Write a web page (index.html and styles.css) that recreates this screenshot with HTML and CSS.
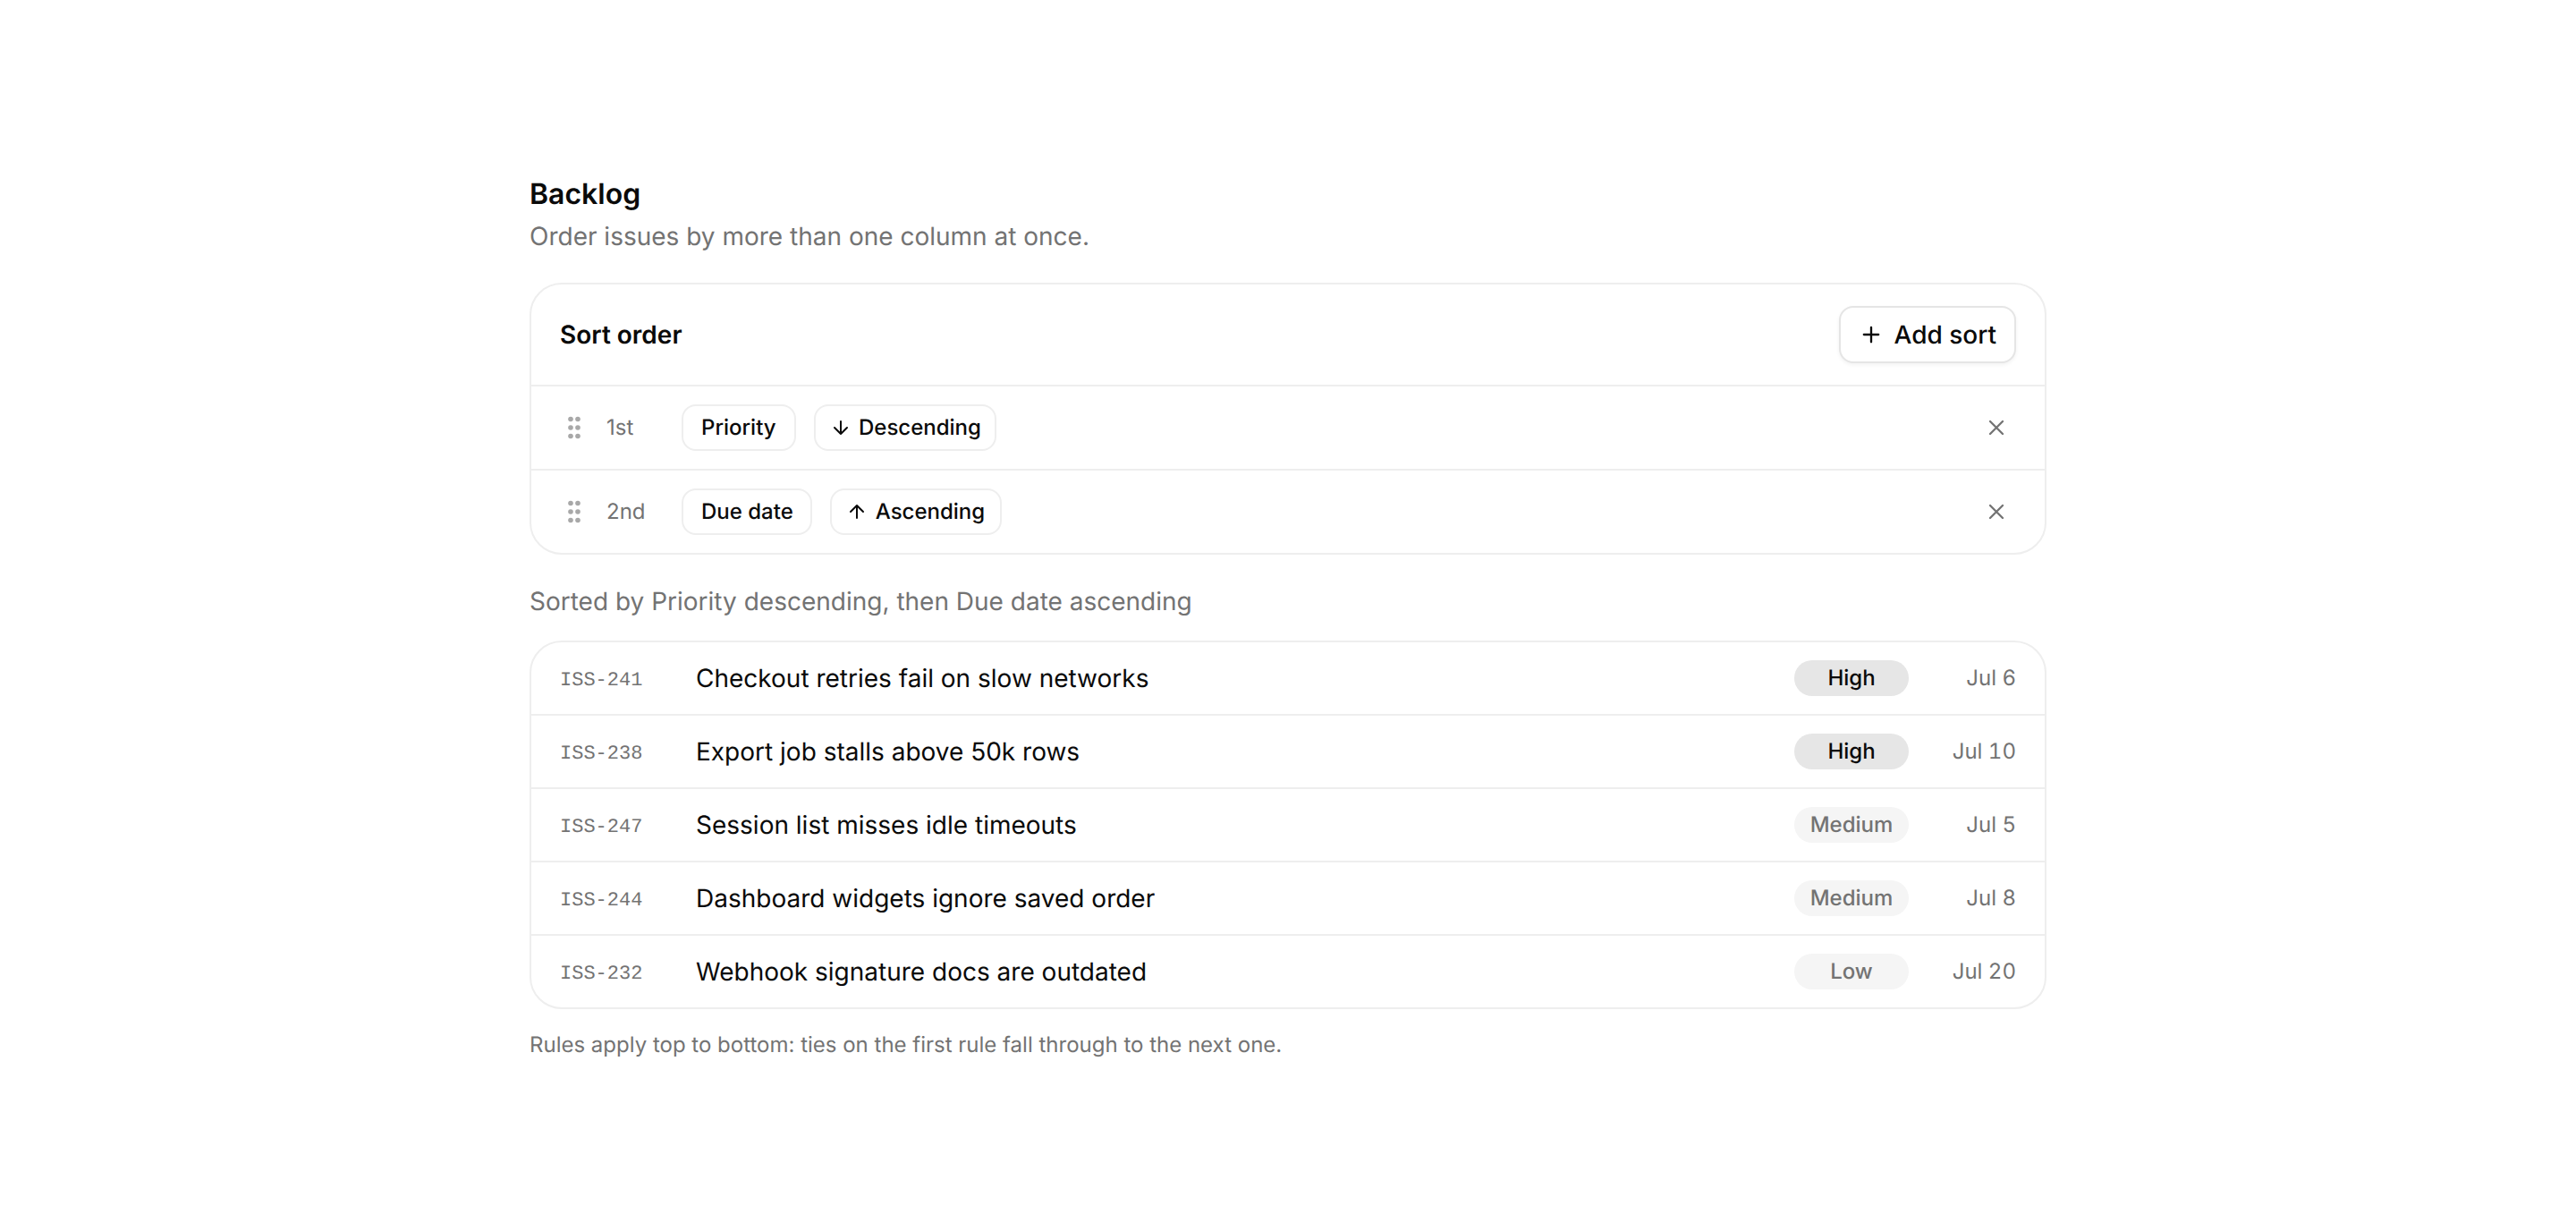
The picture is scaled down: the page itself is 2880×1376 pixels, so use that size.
FILE: index.html
```
<!DOCTYPE html>
<html lang="en">

<head>
  <meta charset="UTF-8">
  <meta name="viewport" content="width=device-width, initial-scale=1.0">
  <title>Backlog</title>
  <link rel="stylesheet" href="styles.css">
</head>
<body>
  <!-- Shared icons -->
  <svg class="icon-defs" width="0" height="0" aria-hidden="true">
    <symbol id="plus" viewBox="0 0 24 24"><path d="M5 12h14M12 5v14"/></symbol>
    <symbol id="close" viewBox="0 0 24 24"><path d="M18 6 6 18M6 6l12 12"/></symbol>
    <symbol id="arrow-down" viewBox="0 0 24 24"><path d="M12 5v14M19 12l-7 7-7-7"/></symbol>
    <symbol id="arrow-up" viewBox="0 0 24 24"><path d="M5 12l7-7 7 7M12 19V5"/></symbol>
    <symbol id="grip" viewBox="0 0 16 26">
      <circle cx="4" cy="3.5" r="2.8"/><circle cx="12" cy="3.5" r="2.8"/>
      <circle cx="4" cy="13" r="2.8"/><circle cx="12" cy="13" r="2.8"/>
      <circle cx="4" cy="22.5" r="2.8"/><circle cx="12" cy="22.5" r="2.8"/>
    </symbol>
  </svg>

  <main class="backlog">
    <h1>Backlog</h1>
    <p class="subtitle">Order issues by more than one column at once.</p>

    <!-- Sort rules -->
    <section class="card">
      <div class="card-header">
        <h2>Sort order</h2>
        <button class="add-button" type="button"><svg class="icon"><use href="#plus"/></svg>Add sort</button>
      </div>
      <div class="rule">
        <span class="grip"><svg><use href="#grip"/></svg></span>
        <span class="rank">1st</span>
        <button class="chip priority" type="button">Priority</button>
        <button class="chip direction descending" type="button"><svg class="icon"><use href="#arrow-down"/></svg>Descending</button>
        <button class="remove" type="button" aria-label="Remove"><svg class="icon"><use href="#close"/></svg></button>
      </div>
      <div class="rule">
        <span class="grip"><svg><use href="#grip"/></svg></span>
        <span class="rank">2nd</span>
        <button class="chip due-date" type="button">Due date</button>
        <button class="chip direction ascending" type="button"><svg class="icon"><use href="#arrow-up"/></svg>Ascending</button>
        <button class="remove" type="button" aria-label="Remove"><svg class="icon"><use href="#close"/></svg></button>
      </div>
    </section>

    <p class="summary">Sorted by Priority descending, then Due date ascending</p>

    <!-- Issues -->
    <section class="card">
      <div class="issue">
        <span class="issue-id">ISS-241</span>
        <span class="issue-title">Checkout retries fail on slow networks</span>
        <span class="badge high">High</span>
        <span class="due">Jul 6</span>
      </div>
      <div class="issue">
        <span class="issue-id">ISS-238</span>
        <span class="issue-title">Export job stalls above 50k rows</span>
        <span class="badge high">High</span>
        <span class="due">Jul 10</span>
      </div>
      <div class="issue">
        <span class="issue-id">ISS-247</span>
        <span class="issue-title">Session list misses idle timeouts</span>
        <span class="badge">Medium</span>
        <span class="due">Jul 5</span>
      </div>
      <div class="issue">
        <span class="issue-id">ISS-244</span>
        <span class="issue-title">Dashboard widgets ignore saved order</span>
        <span class="badge">Medium</span>
        <span class="due">Jul 8</span>
      </div>
      <div class="issue">
        <span class="issue-id">ISS-232</span>
        <span class="issue-title">Webhook signature docs are outdated</span>
        <span class="badge">Low</span>
        <span class="due">Jul 20</span>
      </div>
    </section>

    <p class="note">Rules apply top to bottom: ties on the first rule fall through to the next one.</p>
  </main>
</body>
</html>
```
FILE: styles.css
```
* {
  box-sizing: border-box;
}

body {
  font-family: Inter, sans-serif;
  font-size: 28px;
  line-height: 40px;
  text-rendering: geometricPrecision;
  margin: 0;
  display: flex;
  justify-content: center;
  align-items: center;
  min-height: 100vh;
  color: #0a0a0a;
  background-color: #fff;
}

.icon-defs {
  position: absolute;
}

.backlog {
  width: 1696px;
}

h1,
h2,
p {
  margin: 0;
}

h1 {
  padding-top: 1px;
  font-size: 32px;
  line-height: 47px;
  font-weight: 600;
}

h2 {
  font-size: 28px;
  font-weight: 600;
}

.subtitle,
.summary,
.note {
  color: #737373;
}

.subtitle {
  margin: 4px 0 32px;
}

.summary {
  margin: 32px 0 24px;
}

.note {
  margin-top: 24px;
  font-size: 24px;
  line-height: 32px;
}

.card {
  border: 2px solid #eee;
  border-radius: 36px;
}

.card > * + * {
  border-top: 2px solid #eee;
}

.card-header {
  display: flex;
  align-items: center;
  justify-content: space-between;
  padding: 24px 32px;
}

button {
  display: flex;
  align-items: center;
  font-family: inherit;
  font-weight: 500;
  line-height: inherit;
  text-rendering: inherit;
  white-space: nowrap;
  color: inherit;
  background-color: #fff;
  cursor: pointer;
}

.icon {
  flex-shrink: 0;
  width: 28px;
  height: 28px;
  fill: none;
  stroke: currentColor;
  stroke-width: 2;
  stroke-linecap: round;
  stroke-linejoin: round;
}

.add-button {
  width: 198px;
  height: 64px;
  padding: 0 0 0 20px;
  gap: 11.5px;
  font-size: 28px;
  border: 2px solid #e5e5e5;
  border-radius: 16px;
  box-shadow: 0 2px 4px rgba(0, 0, 0, 0.05);
}

/* Sort rule rows */
.rule {
  display: flex;
  align-items: center;
  gap: 20px;
  padding: 20px 32px;
  font-size: 24px;
}

.grip {
  display: flex;
  justify-content: center;
  width: 32px;
}

.grip svg {
  width: 16px;
  height: 26px;
  fill: #a8a8a8;
}

.rank {
  width: 64px;
  color: #737373;
}

.chip {
  height: 52px;
  padding: 0 0 0 20px;
  font-size: 24px;
  border: 2px solid #eee;
  border-radius: 16px;
}

.direction {
  padding-left: 16px;
  gap: 8px;
}

.priority {
  width: 128px;
}

.due-date {
  width: 146px;
}

.descending {
  width: 204px;
}

.ascending {
  width: 192px;
  gap: 8.75px;
}

.chip .icon {
  width: 24px;
  height: 24px;
}

.remove {
  justify-content: center;
  width: 44px;
  height: 44px;
  margin-left: auto;
  padding: 0;
  border: none;
  color: #737373;
}

/* Issue rows */
.issue {
  display: flex;
  align-items: center;
  gap: 24px;
  padding: 20px 32px;
}

.issue-id {
  align-self: flex-start;
  width: 128px;
  padding-top: 10px;
  font-family: "Liberation Mono", monospace;
  font-size: 22px;
  line-height: 25px;
  color: #737373;
}

.issue-title {
  flex: 1;
}

.badge {
  width: 128px;
  font-size: 24px;
  font-weight: 500;
  text-align: center;
  color: #737373;
  background-color: #f5f5f5;
  border-radius: 20px;
}

.badge.high {
  color: #0a0a0a;
  background-color: #e6e6e6;
}

.due {
  width: 96px;
  font-size: 24px;
  text-align: right;
  color: #737373;
  font-variant-numeric: tabular-nums;
}
```
